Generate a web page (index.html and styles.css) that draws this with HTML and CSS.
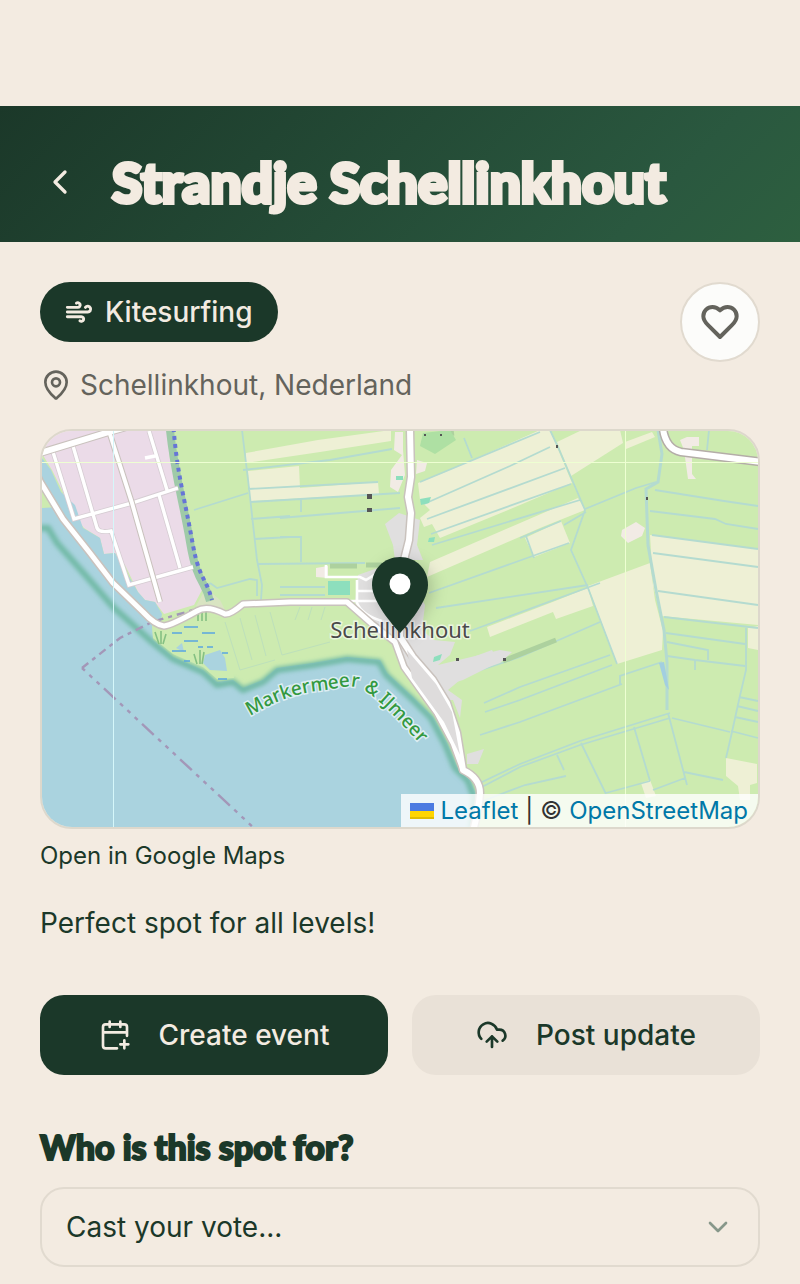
FILE: index.html
```html
<!DOCTYPE html>
<html lang="en">
<head>
    <meta charset="UTF-8">
    <meta name="viewport" content="width=device-width, initial-scale=1.0">
    <title>Strandje Schellinkhout</title>
    <link rel="stylesheet" href="styles.css">
</head>
<body>
<header class="page-header">
    <button class="back-button" type="button" aria-label="Back">
        <svg class="icon icon-large" viewBox="0 0 24 24"><path d="m15 18-6-6 6-6"/></svg>
    </button>
    <h1>Strandje Schellinkhout</h1>
</header>
<main class="content">
    <div class="spot-top">
        <div class="spot-info">
            <span class="sport-tag">
                <svg class="icon icon-small" viewBox="0 0 24 24"><path d="M12.8 19.6A2 2 0 1 0 14 16H2"/><path d="M17.5 8a2.5 2.5 0 1 1 2 4H2"/><path d="M9.8 4.4A2 2 0 1 1 11 8H2"/></svg>
                Kitesurfing
            </span>
            <p class="location">
                <svg class="icon" viewBox="0 0 24 24"><path d="M20 10c0 4.993-5.539 10.193-7.399 11.799a1 1 0 0 1-1.202 0C9.539 20.193 4 14.993 4 10a8 8 0 0 1 16 0"/><circle cx="12" cy="10" r="3"/></svg>
                Schellinkhout, Nederland
            </p>
        </div>
        <button class="favorite-button" type="button" aria-label="Add to favorites">
            <svg class="icon icon-large" viewBox="0 0 24 24"><path d="M19 14c1.49-1.46 3-3.21 3-5.5A5.5 5.5 0 0 0 16.5 3c-1.76 0-3 .5-4.5 2-1.5-1.5-2.74-2-4.5-2A5.5 5.5 0 0 0 2 8.5c0 2.3 1.5 4.05 3 5.5l7 7Z"/></svg>
        </button>
    </div>

    <div class="map">
        <svg class="map-canvas" viewBox="42 431 716 396" preserveAspectRatio="xMidYMid slice">
            <defs>
                <filter id="soft"><feGaussianBlur stdDeviation="2"/></filter>
                <filter id="smooth"><feGaussianBlur stdDeviation="0.7"/></filter>
                <path id="sea-label" d="M250 716C270 704 292 694 318 691S350 683 364 690C382 702 396 718 424 748"/>
            </defs>
            <g filter="url(#smooth)">
            <rect x="30" y="419" width="740" height="420" fill="#cdebb0"/>

            <!-- farmland -->
            <g fill="#eef0d5">
                <path d="M246 453 318 440 391 430V441L320 452 246 463Z"/>
                <path d="M248 471 299 466 300 488 378 482 379 494 250 501Z"/>
                <path d="M418 483 445 472 540 430H550L572 483 520 505 440 538 432 524 424 527 420 518 430 510 420 500Z"/>
                <path d="M430 562 578 498 585 510 540 528 427 577Z"/>
                <path d="M557 442 582 430H620L623 443 571 476Z"/>
                <path d="M625 442 652 432 655 437 626 449Z"/>
                <path d="M525 538 561 521 570 543 534 557Z"/>
                <path d="M487 627 550 603 588 588 593 606 556 619 553 612 490 637Z"/>
                <path d="M588 586 650 563 655 600 663 631 662 650 617 664Z"/>
                <path d="M650 535 758 549V625L661 616 653 585Z"/>
                <path d="M748 628 758 626V650L748 648Z"/>
                <path d="M726 758 757 764V783L750 785 750 800H740L738 786 726 776Z"/>
                <path d="M641 783 650 780 656 796 646 798Z"/>
            </g>

            <!-- ditches -->
            <g fill="none" stroke="#b4dbd0" stroke-width="1.8">
                <path d="M242 430 249 488 257 560 262 585 261 600M194 510 248 493M251 519 290 516M254 539 290 537M257 564 365 563M243 470 330 460 392 449M248 489 378 482M251 502 400 493M280 518 400 508M301 500V512M280 537H301V562M280 587H325M280 595H325"/>
                <path d="M210 583 217 588 250 579 257 580V596M210 583 203 596"/>
                <path d="M420 482 540 432M424 504 510 466 550 447M427 519 565 468M431 534 571 484M432 545 580 500M520 538 561 521M429 593 569 543M436 608 588 585M470 631 600 583"/>
                <path d="M550 430 558 447 585 510 571 550 588 588 617 664M526 536 534 558M585 509 636 488 656 482M564 525 586 512"/>
                <path d="M478 671 520 657 600 622M484 703 520 687 610 655M485 712 520 700 612 665M480 735 520 722 622 684M620 684V676L662 662M480 783 520 764 580 741 670 713M480 788 520 767 580 745 670 718M581 743 606 794M634 727 650 781M606 793 650 781M653 790 685 778M668 713 687 785M672 718 730 732M684 772 723 780"/>
                <path d="M658 430 662 454 658 482 646 489 648 545 656 590 664 630 667 662 667 710" stroke-width="3"/>
                <path d="M655 490 724 501 758 506M650 511 715 519 726 524 758 529M652 535 758 549M653 553 758 567M658 591 758 605M664 617 758 628M666 633 745 644M667 642 708 650V660M667 656 695 660 745 666M746 628V670L739 700 732 732 726 758M739 697 758 701M737 706 758 711M735 717 758 722M731 731 758 738M695 660V670M480 802 525 785 566 776M557 755 564 770"/>
                <path d="M709 430 707 450M464 438 472 458"/>
            </g>
            <g fill="none" stroke="#bde0bb" stroke-width="1">
                <path d="M225 622 240 670 275 660M240 618 252 660M255 615 266 656M270 612 282 655 330 642M300 607 295 620M312 607 308 620M325 607 321 620"/>
            </g>
            <g fill="none" stroke="#add19e" stroke-width="5">
                <path d="M503 661 556 640M424 437 454 433M330 566H357M366 565H382"/>
            </g>
            <path d="M423 433 450 430 456 440 435 454 420 446Z" fill="#aee0a3"/>
            <path d="M659 663 664 662 669 690 665 685Z" fill="#a2cfe0"/>

            <!-- industrial area -->
            <path d="M30 419H166L170 460 180 490 185 530 193 565 202 590 194 605 164 614 155 602 145 600 138 592 125 565 115 553 104 554 100 538 84 528 70 510 62 490 52 470 41 452 30 440Z" fill="#ebdbe8"/>
            <path d="M196 606 206 588 220 600 226 612 212 612Z" fill="#d9e4c2"/>
            <path d="M169 420C173 470 183 500 190 542S205 580 210 601" fill="none" stroke="#9fcaa8" stroke-width="8"/>
            <path d="M173 420C176 470 185 500 192 540S205 575 212 600" fill="none" stroke="#6675d6" stroke-width="4" stroke-dasharray="4 4"/>

            <!-- villages -->
            <g fill="#e0dfdf">
                <path d="M399 513 420 520 417 545 423 560 395 560 393 545 385 524Z"/>
                <path d="M358 575 400 560 425 605 422 630 434 640 455 642 450 655 438 665 500 650 512 652 500 663 466 675 448 690 462 700 460 718 453 700 440 700 462 766 455 750 392 640 372 620 355 603Z"/>
                <path d="M438 670 492 650 499 662 463 680 450 684Z"/>
                <path d="M467 754 484 749 478 764 467 764Z"/>
            </g>
            <g fill="#f2ebe5">
                <path d="M395 432H403V450L405 475 398 492 390 487 391 470 402 455 394 450Z"/>
                <path d="M417 460 427 463 425 471 416 474Z"/>
                <path d="M316 568 328 566V578L316 577Z"/>
                <path d="M680 440 687 437H699V446H692V474L696 479H688L684 450Z"/>
                <path d="M622 530 636 522 645 528 642 536 628 543 621 536Z"/>
            </g>
            <g fill="#8ddfbd">
                <path d="M328 581H350V595H328Z"/>
                <path d="M396 476H403V480H396ZM420 499 431 497 429 503 421 505ZM429 538 435 537 434 542H428ZM434 657 442 654 440 660 433 662Z"/>
            </g>

            <!-- water and shore -->
            <path d="M30 440 42 458 51 470 61 492 75 505 83 528 100 538 104 554 115 553 128 575 138 592 145 600 155 602 162 614 160 625 140 612 112 583 63 520 42 484 30 470Z" fill="#aad3df"/>
            <path d="M30 509 58 507 63 520 112 583 143 613 152 622 153 640 173 657 203 670 217 682 233 680 243 688 263 680 277 668 313 663 347 657 380 660 387 673 413 697 433 717 447 743 457 767 470 780 477 797 472 839H30Z" fill="#aad3df"/>
            <g fill="none" stroke="#6fb9a4" stroke-width="6" filter="url(#soft)">
                <path d="M30 528H48L57 543 87 577 113 607 152 642 173 659 203 672 217 685 233 682 243 690 263 682 277 670 313 665 347 659 379 662 386 675 412 699 431 718 445 744 455 768 468 781 474 797 471 839"/>
            </g>
            <path d="M152 622 170 628 200 616 221 618 232 660 234 678 217 679 203 667 173 654 153 638Z" fill="#cdebb0"/>
            <path d="M205 655 220 650 225 658 227 671 210 670 203 663ZM176 648 182 643 184 652Z" fill="#aad3df"/>
            <g stroke="#5aa7e0" stroke-width="1.6">
                <path d="M184 627H198M172 633H182M202 633H215M184 641H198M198 647H203M207 647H213M172 651H186M222 653H228M184 661H190M218 679H227"/>
            </g>
            <g fill="none" stroke="#85c083" stroke-width="1.6">
                <path d="M155 632 159 644M161 631V644M166 634 163 644M194 654 197 664M200 650V664M204 652 202 664M198 612V621M202 611V621M206 612V621"/>
            </g>
            <path d="M82 668 255 829" fill="none" stroke="#a397b8" stroke-width="2.4" stroke-dasharray="4 6 4 6 4 6 16 6"/>
            <path d="M82 668 120 638 152 622 200 608" fill="none" stroke="#a397b8" stroke-width="2.4" stroke-dasharray="8 5 4 5"/>

            <!-- streets -->
            <g fill="none" stroke="#d6cdd3" stroke-width="5">
                <path d="M53 452 74 519 132 503 178 488M73 446 97 528Q99 533 111 531L129 585 193 567M149 431 167 490M159 495 180 568"/>
            </g>
            <g fill="none" stroke="#fff" stroke-width="3.4">
                <path d="M53 452 74 519 132 503 178 488M73 446 97 528Q99 533 111 531L129 585 193 567M149 431 167 490M159 495 180 568M145 458 155 456"/>
                <path d="M326 565V577H360L366 580 390 565M357 580V603Q362 615 382 621M350 601H390M358 591H385" stroke-width="2.6"/>
            </g>
            <g fill="none" stroke="#c9c2bd" stroke-linejoin="round">
                <path d="M109 431 132 503 160 602" stroke-width="6"/>
                <path d="M30 456 109 432 130 426" stroke-width="8"/>
                <path d="M30 460 40 481 63 519 90 553 113 583 143 612Q155 625 164 626 172 625 197 611 207 605 225 614 230 615 243 604L290 602H347L372 624 395 642 404 667 437 713 453 743 463 770" stroke-width="8"/>
                <path d="M410 419V429L411 477 408 497 411 513 409 540 404 560 400 637 413 657 433 680 447 703 457 733 463 770Q480 778 480 793 479 810 471 839" stroke-width="9"/>
                <path d="M663 419V429Q666 449 681 452L770 463" stroke-width="9" stroke="#b4ada8"/>
            </g>
            <g fill="none" stroke="#fff" stroke-linejoin="round">
                <path d="M109 431 132 503 160 602" stroke-width="4"/>
                <path d="M30 456 109 432 130 426" stroke-width="6"/>
                <path d="M30 460 40 481 63 519 90 553 113 583 143 612Q155 625 164 626 172 625 197 611 207 605 225 614 230 615 243 604L290 602H347L372 624 395 642 404 667 437 713 453 743 463 770" stroke-width="5"/>
                <path d="M410 419V429L411 477 408 497 411 513 409 540 404 560 400 637 413 657 433 680 447 703 457 733 463 770Q480 778 480 793 479 810 471 839" stroke-width="6"/>
                <path d="M663 419V429Q666 449 681 452L770 463" stroke-width="6"/>
            </g>
            <path d="M407 650 436 684 452 712 460 755 444 722 412 678Z" fill="#dedcdc"/>

            <g fill="#555">
                <path d="M367 494H372V499H367ZM367 508H372V512H367ZM424 434H426V436H424ZM440 434H442V436H440ZM456 658H459V661H456ZM503 658H506V661H503ZM556 445H558V448H556ZM646 497H648V500H646Z"/>
            </g>
            </g>

            <!-- tile seams -->
            <path d="M113.500 429V829" stroke="#d5f7fa" stroke-width="1"/>
            <path d="M625.500 429V829M40 462.500H760" stroke="#eeffd2" stroke-width="1"/>

            <text class="place-label" x="400" y="638" text-anchor="middle">Schellinkhout</text>
            <text class="sea-label"><textPath href="#sea-label">Markermeer &amp; IJmeer</textPath></text>
        </svg>
        <svg class="map-marker" viewBox="0 0 56 76">
            <path d="M28 0C12 0 0 12 0 28C0 47 28 76 28 76S56 47 56 28C56 12 44 0 28 0Z" fill="#1b3829"/>
            <circle cx="28" cy="27" r="10.500" fill="#fff"/>
        </svg>
        <div class="attribution">
            <a href="#"><svg class="flag" viewBox="0 0 12 8"><path fill="#4C7BE1" d="M0 0h12v4H0z"/><path fill="#FFD500" d="M0 4h12v3H0z"/><path fill="#E0BC00" d="M0 7h12v1H0z"/></svg>Leaflet</a>
            <span class="divider">|</span>
            <span>©</span>
            <a href="#">OpenStreetMap</a>
        </div>
    </div>
    <a class="maps-link" href="#">Open in Google Maps</a>

    <p class="description">Perfect spot for all levels!</p>

    <div class="actions">
        <button class="action primary" type="button">
            <svg class="icon" viewBox="0 0 24 24"><path d="M16 19h6M16 2v4M19 16v6M21 12.598V6a2 2 0 0 0-2-2H5a2 2 0 0 0-2 2v14a2 2 0 0 0 2 2h8.500M3 10h18M8 2v4"/></svg>
            Create event
        </button>
        <button class="action" type="button">
            <svg class="icon" viewBox="0 0 24 24"><path d="M12 13v8M4 14.899A7 7 0 1 1 15.710 8h1.790a4.500 4.500 0 0 1 2.500 8.242M8 17l4-4 4 4"/></svg>
            Post update
        </button>
    </div>

    <h2><label for="vote">Who is this spot for?</label></h2>
    <div class="select-box">
        <select id="vote">
            <option>Cast your vote...</option>
        </select>
        <svg class="icon select-arrow" viewBox="0 0 24 24"><path d="m6 9 6 6 6-6"/></svg>
    </div>
</main>
</body>
</html>
```
FILE: styles.css
```css
* {
    box-sizing: border-box;
}

body {
    margin: 0;
    padding-top: 106px;
    background-color: #f3ebe1;
    color: #1b3829;
    font-family: Inter, sans-serif;
    font-size: 28px;
    line-height: 40px;
}

h1, h2, p {
    margin: 0;
}

a {
    text-decoration: none;
}

button, select {
    font: inherit;
    color: inherit;
    border: none;
    cursor: pointer;
}

h1, h2 {
    font-family: Lato, sans-serif;
    font-weight: 900;
    -webkit-text-stroke: 2px currentColor;
}

.icon {
    width: 32px;
    height: 32px;
    flex-shrink: 0;
    fill: none;
    stroke: currentColor;
    stroke-width: 2;
    stroke-linecap: round;
    stroke-linejoin: round;
}

.icon-small {
    width: 28px;
    height: 28px;
    stroke-width: 2.5;
}

.icon-large {
    width: 40px;
    height: 40px;
}

.page-header {
    display: flex;
    align-items: center;
    gap: 32px;
    padding: 48px 40px 32px;
    background: linear-gradient(135deg, #1b3829 0%, #2a583f 80%, #2d5f3f 100%);
    color: #f3ebe1;
}

.back-button {
    display: flex;
    padding: 0;
    background: none;
}

.page-header h1 {
    font-size: 55px;
    line-height: 56px;
    -webkit-text-stroke-width: 4px;
}

.content {
    padding: 40px 40px 16px;
}

.spot-top {
    display: flex;
    justify-content: space-between;
    align-items: flex-start;
    margin-bottom: 24px;
}

.spot-info {
    display: flex;
    flex-direction: column;
    align-items: flex-start;
    gap: 23px;
}

.sport-tag {
    display: flex;
    align-items: center;
    gap: 12px;
    padding: 10px 25px;
    border-radius: 30px;
    background-color: #1b3829;
    color: #f3ebe1;
    font-weight: 500;
}

.location {
    display: flex;
    align-items: center;
    gap: 8px;
    color: #64635c;
}

.favorite-button {
    display: flex;
    align-items: center;
    justify-content: center;
    width: 80px;
    height: 80px;
    border: 2px solid #e1dacf;
    border-radius: 50%;
    background-color: #fcfcfa;
    color: #64635c;
}

.favorite-button .icon {
    stroke-width: 2.4;
}

.map {
    position: relative;
    height: 400px;
    border: 2px solid #ddd8cc;
    border-radius: 32px;
    overflow: hidden;
}

.map-canvas {
    display: block;
    width: 100%;
    height: 100%;
}

.place-label {
    font-family: "Noto Sans", sans-serif;
    font-size: 22px;
    fill: #4a4a4a;
    stroke: rgba(255, 255, 255, 0.6);
    stroke-width: 3px;
    paint-order: stroke;
}

.sea-label {
    font-family: "Noto Sans", sans-serif;
    font-size: 19px;
    font-weight: 500;
    fill: #339940;
    stroke: rgba(255, 255, 255, 0.6);
    stroke-width: 3px;
    paint-order: stroke;
}

.map-marker {
    position: absolute;
    left: 50%;
    bottom: 50%;
    width: 56px;
    height: 76px;
    margin-left: -28px;
    margin-bottom: -4px;
    filter: drop-shadow(4px 4px 8px rgba(0, 0, 0, 0.2));
}

.attribution {
    position: absolute;
    right: 0;
    bottom: 0;
    display: flex;
    gap: 7px;
    padding: 0 10px 0 9px;
    background-color: rgba(255, 255, 255, 0.8);
    color: #333;
    font-size: 24px;
    line-height: 33px;
}

.attribution a {
    color: #0078a8;
}

.flag {
    width: 24px;
    height: 16px;
    margin-right: 6px;
}

.maps-link {
    display: block;
    margin: 9px 0 29px;
    color: inherit;
    font-size: 24px;
    line-height: 36px;
}

.description {
    margin-bottom: 52px;
}

.actions {
    display: grid;
    grid-template-columns: 1fr 1fr;
    gap: 24px;
    margin-bottom: 52px;
}

.action {
    display: flex;
    align-items: center;
    justify-content: center;
    gap: 28px;
    height: 80px;
    border-radius: 24px;
    background-color: #e9e1d7;
    font-weight: 500;
}

.action.primary {
    background-color: #1b3829;
    color: #f3ebe1;
}

.content h2 {
    margin-bottom: 20px;
    font-size: 34px;
    line-height: 40px;
}

.select-box {
    position: relative;
}

.select-box select {
    display: block;
    width: 100%;
    height: 80px;
    padding: 0 72px 0 24px;
    border: 2px solid #e1dacf;
    border-radius: 24px;
    background: none;
    appearance: none;
}

.select-arrow {
    position: absolute;
    top: 24px;
    right: 26px;
    color: #87978a;
    pointer-events: none;
}
```
